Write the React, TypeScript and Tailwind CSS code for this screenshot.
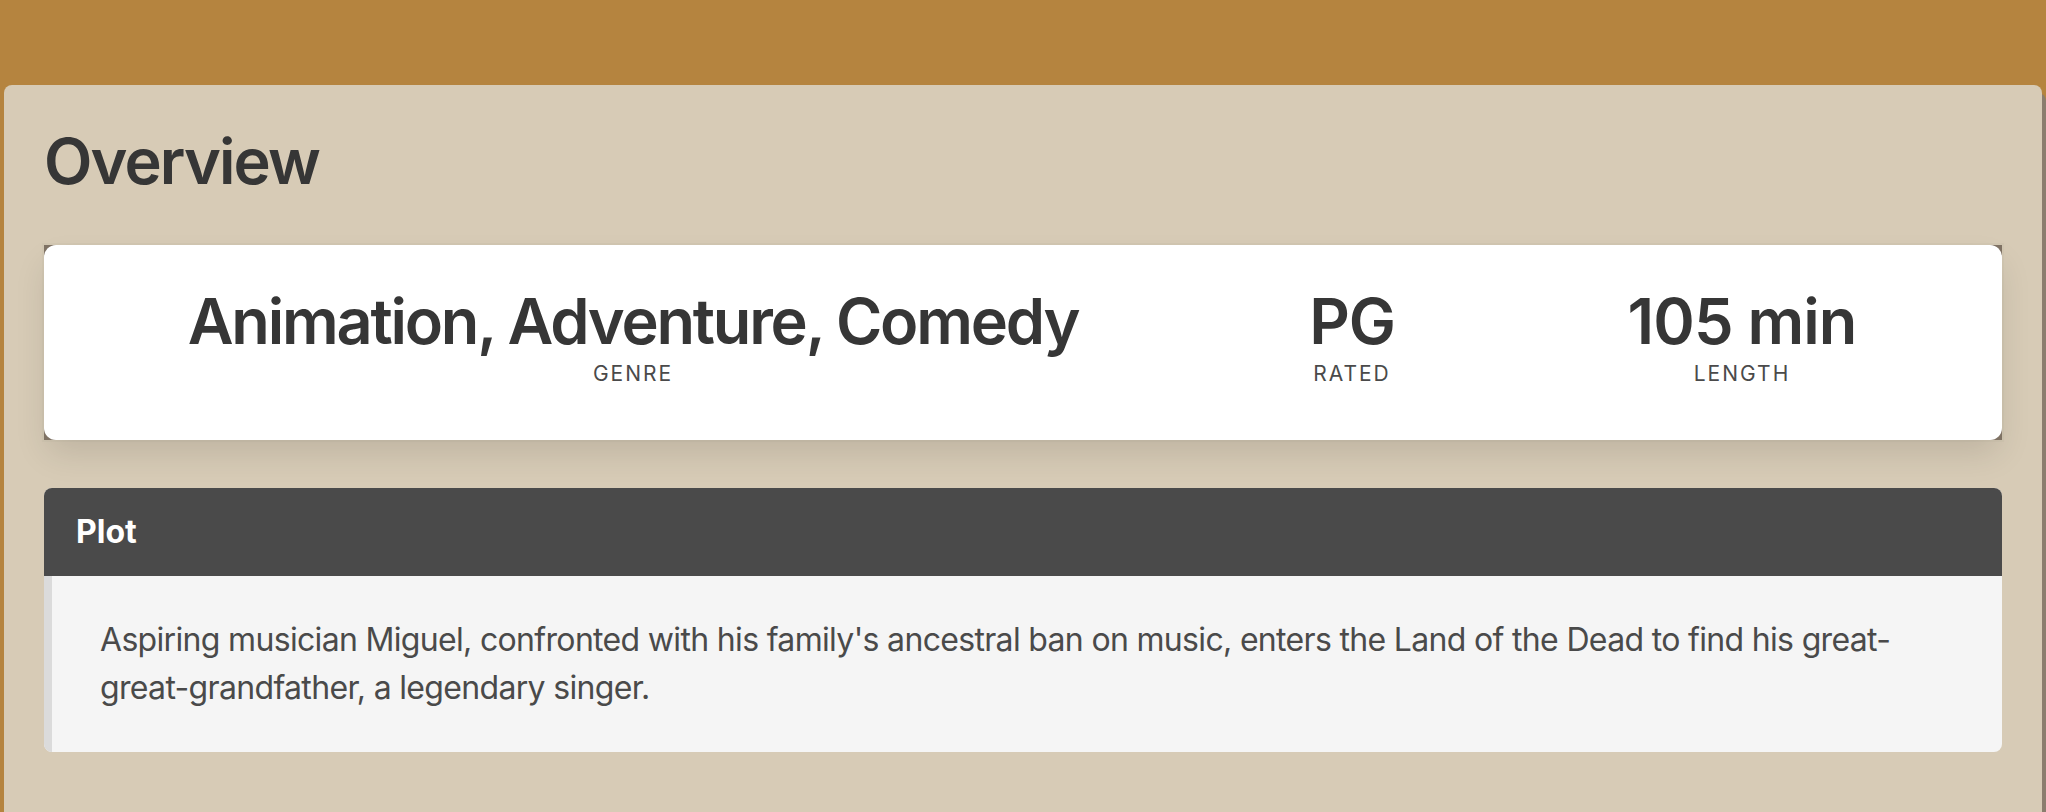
import React from "react";

export default function App() {
  const font = { fontFamily: "Inter, 'Liberation Sans', sans-serif" };
  return (
    <div className="min-h-[812px] w-full bg-[#b5843f] pt-[85px] px-[4px] overflow-hidden" style={font}>
      <div className="rounded-[8px] bg-[#d7cbb6] p-[40px] min-h-[900px] shadow-[4px_8px_0_#8b7d6e]">
        <h1 className="text-[63px] leading-[72px] font-semibold text-[#363636] tracking-[-0.03em] mb-[48px]">
          Overview
        </h1>

        <div className="bg-[#7f7264] shadow-[0_16px_32px_-4px_rgba(10,10,10,0.12),0_0_0_2px_rgba(10,10,10,0.02)] mb-[48px]">
          <div className="rounded-[12px] bg-white p-[40px] grid grid-cols-[1098fr_340fr_440fr] text-center">
            <div>
              <div className="text-[63px] leading-[72px] font-semibold text-[#363636] tracking-[-0.035em]">
                Animation, Adventure, Comedy
              </div>
              <div className="text-[21px] leading-[33px] tracking-[2px] uppercase text-[#4a4a4a] mb-[10px]">
                Genre
              </div>
            </div>
            <div>
              <div className="text-[63px] leading-[72px] font-semibold text-[#363636] tracking-[-0.02em]">
                PG
              </div>
              <div className="text-[21px] leading-[33px] tracking-[2px] uppercase text-[#4a4a4a] mb-[10px]">
                Rated
              </div>
            </div>
            <div>
              <div className="text-[63px] leading-[72px] font-semibold text-[#363636] tracking-[-0.015em]">
                105 min
              </div>
              <div className="text-[21px] leading-[33px] tracking-[2px] uppercase text-[#4a4a4a] mb-[10px]">
                Length
              </div>
            </div>
          </div>
        </div>

        <div className="rounded-[8px] bg-[#f5f5f5] text-[32px]">
          <div className="rounded-t-[8px] bg-[#4a4a4a] text-white font-bold leading-[40px] px-[32px] py-[24px]">
            Plot
          </div>
          <div className="rounded-b-[8px] border-l-[8px] border-[#dbdbdb] px-[48px] py-[40px] text-[#4a4a4a] leading-[48px] tracking-[-0.021em]">
            Aspiring musician Miguel, confronted with his family's ancestral ban on music, enters the Land of the Dead to find his great-great-grandfather, a legendary singer.
          </div>
        </div>
      </div>
    </div>
  );
}
